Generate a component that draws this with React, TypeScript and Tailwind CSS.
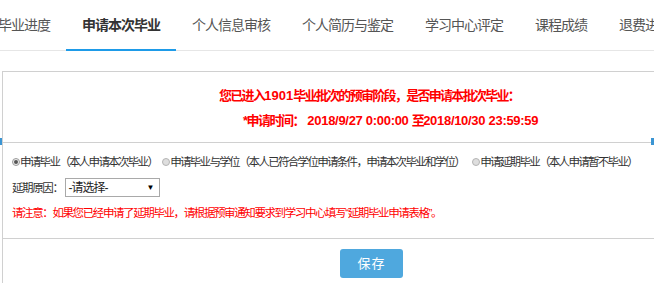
import React from "react";

function Radio({ checked, className }: { checked?: boolean; className?: string }) {
  return checked ? (
    <span
      className={
        "flex h-[8px] w-[8px] shrink-0 items-center justify-center rounded-full border border-[#9a9a9a] bg-[#ededed] " +
        (className ?? "")
      }
    >
      <span className="h-[4px] w-[4px] rounded-full bg-[#555]" />
    </span>
  ) : (
    <span
      className={
        "block h-[8px] w-[8px] shrink-0 rounded-full border border-[#b4b4b4] bg-[#dedede] " +
        (className ?? "")
      }
    />
  );
}

export default function App() {
  const tabs = [
    "毕业进度",
    "申请本次毕业",
    "个人信息审核",
    "个人简历与鉴定",
    "学习中心评定",
    "课程成绩",
    "退费进度",
  ];
  return (
    <div className="relative h-[283px] w-[654px] overflow-hidden bg-white font-['Liberation_Sans','Noto_Sans_CJK_SC',sans-serif]">
      <div className="-ml-[18px] flex h-[51px] w-[720px] border-b border-[#e6e6e6]">
        {tabs.map((t, i) => (
          <div
            key={t}
            className={
              i === 1
                ? "relative flex shrink-0 items-center px-4 text-[14px] font-bold tracking-[-1px] text-[#333]"
                : "relative flex shrink-0 items-center px-4 text-[14px] tracking-[-1px] text-[#555]"
            }
          >
            {t}
            {i === 1 && (
              <span className="absolute -bottom-px left-0 right-0 h-[2px] bg-[#1e9be8]" />
            )}
          </div>
        ))}
      </div>

      <div className="ml-[2px] mt-[20px] border-l border-t border-[#d0d0d0]">
        <div className="flex h-[71px] flex-col gap-[5px] border-b border-[#d0d0d0] pl-[216px] pt-[14px] text-[13px] font-bold leading-[20px] text-[#ff0000]">
          <div className="whitespace-nowrap">
            <span className="tracking-[-1.7px]">您已进入</span>
            <span>1901</span>
            <span className="tracking-[-1.7px]">毕业批次的预审阶段，是否申请本批次毕业：</span>
          </div>
          <div className="ml-[24px] whitespace-nowrap">
            <span className="tracking-[-1.5px]">*申请时间：</span>
            <span className="tracking-[-0.3px]"> 2018/9/27 0:00:00 </span>
            <span className="tracking-[-1.7px]">至</span>
            <span className="tracking-[-0.3px]">2018/10/30 23:59:59</span>
          </div>
        </div>

        <div className="h-[96px] border-b border-[#d0d0d0] pl-[9px] pt-[10px] text-[11.5px] leading-[18px] tracking-[-1.7px] text-[#333]">
          <div className="flex h-[18px] items-center whitespace-nowrap">
            <Radio checked />
            <span>申请毕业（本人申请本次毕业）</span>
            <Radio className="ml-[5px]" />
            <span>申请毕业与学位（本人已符合学位申请条件，申请本次毕业和学位）</span>
            <Radio className="ml-[8px]" />
            <span>申请延期毕业（本人申请暂不毕业）</span>
          </div>
          <div className="mt-[7px] flex h-[19px] items-center whitespace-nowrap">
            <span className="tracking-[-1.4px]">延期原因：</span>
            <div className="ml-[2px] flex h-[19px] w-[95px] items-center justify-between border border-[#a9a9a9] bg-white pl-[3px] pr-[4px] text-[12px] tracking-[-1px] text-[#222]">
              <span>-请选择-</span>
              <span className="text-[8px] tracking-normal text-black">▼</span>
            </div>
          </div>
          <div className="mt-[7px] whitespace-nowrap tracking-[-1.4px] text-[#ff0000]">
            请注意：如果您已经申请了延期毕业，请根据预审通知要求到学习中心填写“延期毕业申请表格”。
          </div>
        </div>

        <div className="h-[60px] pt-[10px]">
          <div className="ml-[337px] flex h-[29px] w-[63px] items-center justify-center rounded-[3px] bg-[#4fa8de] text-[13px] tracking-[1px] text-white">
            保存
          </div>
        </div>
      </div>

      <span className="absolute left-0 top-[138px] h-[7px] w-[2px] bg-[#3b95d3]" />
      <span className="absolute right-0 top-[138px] h-[7px] w-[3px] bg-[#3b95d3]" />
    </div>
  );
}
